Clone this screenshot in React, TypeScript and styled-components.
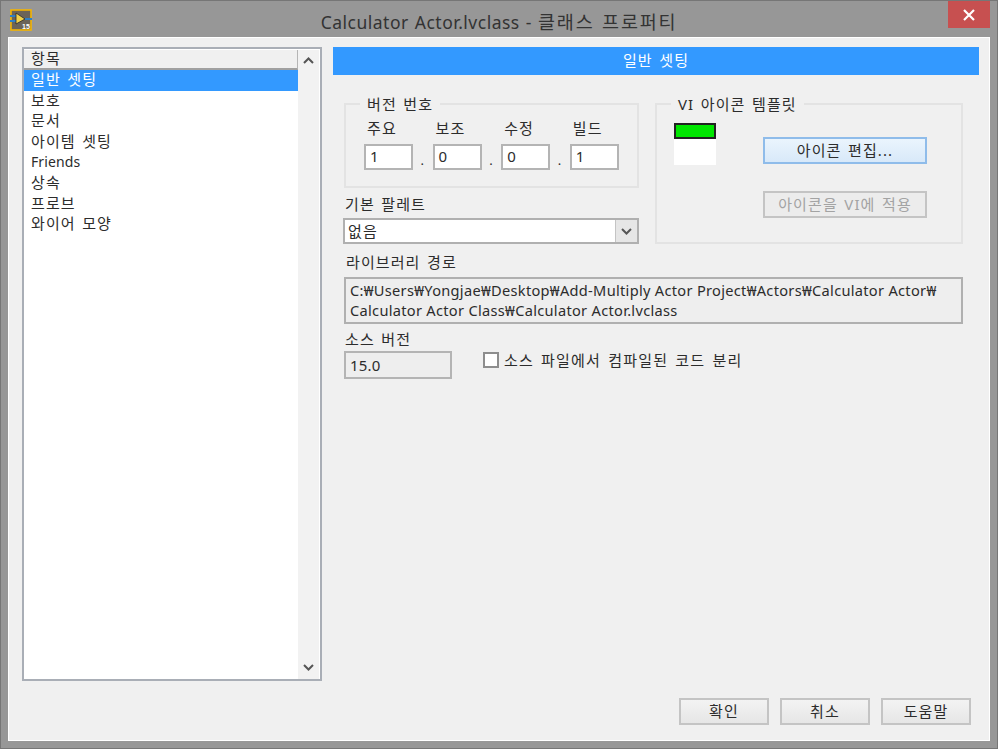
import React from "react";
import styled, { createGlobalStyle } from "styled-components";

const Global = createGlobalStyle`
  html, body { margin: 0; padding: 0; background: #979797; }
  * { box-sizing: border-box; }
`;
const FONT = `"Noto Sans", "Noto Sans CJK KR", sans-serif`;

const Win = styled.div`
  width: 998px; height: 749px; display: flex; flex-direction: column;
  background: #979797; border: 1px solid #767676; font-family: ${FONT};
  font-size: 15px; color: #2c2c2c; overflow: hidden; letter-spacing: 1.1px; word-spacing: 1.5px;
`;
const TitleBar = styled.header`
  height: 36px; flex: none; display: grid; grid-template-columns: 1fr auto 1fr;
  align-items: start;
`;
const AppIcon = styled.svg`
  width: 22px; height: 22px; margin: 8px 0 0 9px; display: block;
`;
const Title = styled.div`
  font-size: 17.5px; line-height: 22px; margin-top: 10px; color: #333; white-space: nowrap;
  letter-spacing: 0.5px; word-spacing: 1px;
`;
const TitleKo = styled.span`
  font-size: 18.5px; letter-spacing: 1.8px; word-spacing: 1px;
`;
const Close = styled.div`
  justify-self: end; width: 42px; height: 27px; margin-right: 7px;
  background: #c75050; display: flex; align-items: center; justify-content: center;
`;
const Body = styled.main`
  width: 982px; height: 704px; margin-left: 7px; flex: none; background: #f0f0f0;
  border: 1px solid #fff;
  display: grid; grid-template-columns: 300px 646px; column-gap: 11px;
  padding: 9px 0 0 13px; position: relative;
`;
const ListBox = styled.div`
  width: 300px; height: 634px; background: #fff; border: 2px solid #a9aeb6;
  display: grid; grid-template-columns: 274px 21px; padding-top: 1px;
`;
const ListCol = styled.div`display: flex; flex-direction: column;`;
const ListHead = styled.div`
  height: 20px; line-height: 17px; padding-left: 7px; background: #f0f0f0;
  border-bottom: 2px solid #a0a0a0; border-right: 1px solid #b5b5b5;
`;
const Row = styled.div<{ $on?: boolean; $latin?: boolean }>`
  height: 20.6px; line-height: 19px; padding-left: 7px; white-space: nowrap;
  background: ${p => (p.$on ? "#3399ff" : "transparent")};
  color: ${p => (p.$on ? "#fff" : "#2c2c2c")};
  font-size: ${p => (p.$latin ? 14 : 15)}px;
  letter-spacing: ${p => (p.$latin ? 0.1 : 1.1)}px;
`;
const Scroll = styled.div`
  background: #f2f2f2; display: flex; flex-direction: column; justify-content: space-between;
  align-items: center; padding: 7px 0 8px; height: 629px;
`;
const Right = styled.section`display: flex; flex-direction: column; height: 100%;`;
const Banner = styled.div`
  width: 646px; height: 28px; background: #3399ff; color: #fff; text-align: center;
  line-height: 26px;
`;
const Columns = styled.div`
  display: grid; grid-template-columns: 295px 308px; column-gap: 16px; margin: 28px 0 0 11px;
`;
const Stack = styled.div`display: flex; flex-direction: column;`;
const Group = styled.fieldset<{ $h: number }>`
  margin: 0; padding: 0; height: ${p => p.$h}px; border: 2px solid #e3e3e3; position: relative; min-width: 0;
`;
const Legend = styled.span`
  position: absolute; top: -11px; left: 14px; padding: 0 7px; background: #f0f0f0;
  line-height: 20px; white-space: nowrap;
`;
const VersionRow = styled.div`
  display: grid; grid-template-columns: repeat(4, 49px); column-gap: 19.6px; padding: 13px 0 0 18px;
`;
const Field = styled.div`display: flex; flex-direction: column;`;
const FieldLabel = styled.div`
  line-height: 20px; height: 26px; padding-left: 3px; white-space: nowrap;
`;
const Dot = styled.span`
  position: absolute; left: -14px; bottom: 1px; font-size: 13px; line-height: 14px;
`;
const Input = styled.div`
  height: 26px; border: 2px solid #b4b4b4; background: #fff; padding-left: 4px; line-height: 21px; position: relative;
`;
const Label = styled.div<{ $mt?: number; $ml?: number }>`
  line-height: 20px; margin-top: ${p => p.$mt ?? 0}px; margin-left: ${p => p.$ml ?? 0}px; white-space: nowrap;
`;
const Select = styled.div`
  height: 26px; margin: 4px 0 0 -1px; width: 296px; border: 2px solid #b0b0b0; background: #fff;
  display: flex; justify-content: space-between; padding-left: 3px; line-height: 22px;
`;
const SelectBtn = styled.div`
  width: 22px; height: 22px; background: #e6e6e6; border-left: 1px solid #c4c4c4; display: flex;
  align-items: center; justify-content: center;
`;
const IconRow = styled.div`
  display: grid; grid-template-columns: 42px 164px; column-gap: 47px; padding: 18px 0 0 17px;
`;
const Swatch = styled.div`
  width: 42px; height: 42px; background: #fff; display: flex; flex-direction: column;
`;
const SwatchTop = styled.div`height: 16px; background: #00e600; border: 2px solid #222;`;
const Buttons = styled.div`display: flex; flex-direction: column; gap: 27px; padding-top: 14px;`;
const Btn = styled.div<{ $w?: number; $kind?: "focus" | "off" }>`
  width: ${p => p.$w ?? 164}px; height: 27px; text-align: center; line-height: 22px; white-space: nowrap;
  border: 2px solid ${p => (p.$kind === "focus" ? "#8fbcea" : "#c4c4c4")};
  background: ${p =>
    p.$kind === "focus"
      ? "linear-gradient(#eaf4fd, #d8e9f9)"
      : p.$kind === "off"
      ? "#ececec"
      : "linear-gradient(#f3f3f3, #e6e6e6)"};
  color: ${p => (p.$kind === "off" ? "#a3a3a3" : "#2c2c2c")};
`;
const PathBlock = styled.div`display: flex; flex-direction: column; margin: 8px 0 0 11px; width: 619px;`;
const PathBox = styled.div`
  height: 47px; margin-top: 5px; border: 2px solid #b0b0b0; background: #eeeeee;
  padding: 1px 4px; line-height: 20px; font-size: 14.6px; white-space: nowrap;
  letter-spacing: 0.3px; word-spacing: 0;
`;
const SrcRow = styled.div`
  display: grid; grid-template-columns: 108px auto; column-gap: 31px; margin: 5px 0 0 0;
`;
const SrcBox = styled.div`
  width: 108px; height: 28px; margin-top: 2px; border: 2px solid #b4b4b4; background: #eeeeee;
  padding-left: 4px; line-height: 24px; letter-spacing: 0.2px;
`;
const CheckRow = styled.label`
  display: flex; align-items: center; gap: 5px; height: 16px; margin-top: 23px; line-height: 16px;
  white-space: nowrap; word-spacing: 2px; letter-spacing: 1.2px;
`;
const CheckBox = styled.span`
  width: 16px; height: 16px; background: #fff; border: 2px solid #8e8e8e; display: block; flex: none;
`;
const Footer = styled.footer`
  position: absolute; right: 18px; bottom: 15px; display: flex; gap: 11px;
`;

const Chevron = ({ up }: { up?: boolean }) => (
  <svg width="11" height="7" viewBox="0 0 11 7" fill="none">
    <path d={up ? "M1 6 L5.5 1.5 L10 6" : "M1 1 L5.5 5.5 L10 1"} stroke="#555" strokeWidth="2" />
  </svg>
);

const items = ["보호", "문서", "아이템 셋팅", "Friends", "상속", "프로브", "와이어 모양"];
const versions = [["주요", "1"], ["보조", "0"], ["수정", "0"], ["빌드", "1"]];

export default function App() {
  return (
    <Win>
      <Global />
      <TitleBar>
        <AppIcon viewBox="0 0 22 22">
          <rect x="1" y="1" width="20" height="20" fill="#6b6459" stroke="#f4b400" strokeWidth="1.6" />
          <path d="M0 7H6M0 12H6M15 10H22" stroke="#2f7fc4" strokeWidth="2" />
          <path d="M6 4 L15 10 L6 15 Z" fill="#f2d24a" stroke="#2a2a2a" strokeWidth="0.8" />
          <text x="12" y="20" fontSize="7" fontWeight="700" fill="#fff" fontFamily="Liberation Sans" letterSpacing="0">15</text>
        </AppIcon>
        <Title>
          Calculator Actor.lvclass - <TitleKo>클래스 프로퍼티</TitleKo>
        </Title>
        <Close>
          <svg width="12" height="12" viewBox="0 0 12 12">
            <path d="M1 1L11 11M11 1L1 11" stroke="#fff" strokeWidth="2.2" />
          </svg>
        </Close>
      </TitleBar>
      <Body>
        <ListBox>
          <ListCol>
            <ListHead>항목</ListHead>
            <Row $on>일반 셋팅</Row>
            {items.map(t => (
              <Row key={t} $latin={t === "Friends"}>{t}</Row>
            ))}
          </ListCol>
          <Scroll>
            <Chevron up />
            <Chevron />
          </Scroll>
        </ListBox>
        <Right>
          <Banner>일반 셋팅</Banner>
          <Columns>
            <Stack>
              <Group $h={85}>
                <Legend>버전 번호</Legend>
                <VersionRow>
                  {versions.map(([l, v], i) => (
                    <Field key={l}>
                      <FieldLabel>{l}</FieldLabel>
                      <Input>
                        {i > 0 && <Dot>.</Dot>}
                        {v}
                      </Input>
                    </Field>
                  ))}
                </VersionRow>
              </Group>
              <Label $mt={6} $ml={1}>기본 팔레트</Label>
              <Select>
                <span>없음</span>
                <SelectBtn>
                  <Chevron />
                </SelectBtn>
              </Select>
            </Stack>
            <Group $h={141}>
              <Legend>VI 아이콘 템플릿</Legend>
              <IconRow>
                <Swatch>
                  <SwatchTop />
                </Swatch>
                <Buttons>
                  <Btn $kind="focus">아이콘 편집...</Btn>
                  <Btn $kind="off">아이콘을 VI에 적용</Btn>
                </Buttons>
              </IconRow>
            </Group>
          </Columns>
          <PathBlock>
            <Label $ml={2}>라이브러리 경로</Label>
            <PathBox>
              C:₩Users₩Yongjae₩Desktop₩Add-Multiply Actor Project₩Actors₩Calculator Actor₩
              <br />
              Calculator Actor Class₩Calculator Actor.lvclass
            </PathBox>
            <SrcRow>
              <Stack>
                <Label $ml={1}>소스 버전</Label>
                <SrcBox>15.0</SrcBox>
              </Stack>
              <CheckRow>
                <CheckBox />
                소스 파일에서 컴파일된 코드 분리
              </CheckRow>
            </SrcRow>
          </PathBlock>
        </Right>
        <Footer>
          <Btn $w={90}>확인</Btn>
          <Btn $w={90}>취소</Btn>
          <Btn $w={90}>도움말</Btn>
        </Footer>
      </Body>
    </Win>
  );
}
